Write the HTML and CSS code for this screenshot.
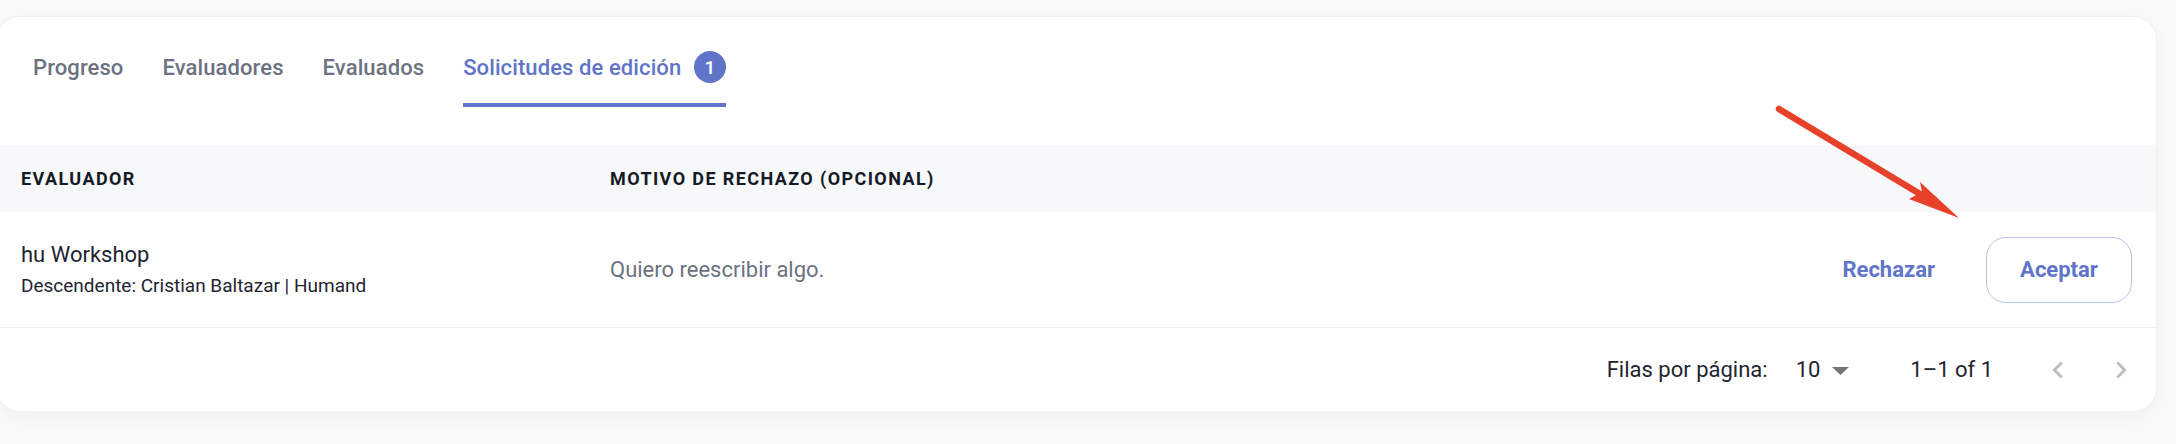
FILE: index.html
```html
<!DOCTYPE html>
<html lang="es">
<head>
<meta charset="utf-8">
<title>Solicitudes de edición</title>
<link rel="stylesheet" href="styles.css">
</head>
<body>
  <div class="card">
    <nav class="tabs">
      <div class="tab">Progreso</div>
      <div class="tab">Evaluadores</div>
      <div class="tab">Evaluados</div>
      <div class="tab active">Solicitudes de edición <span class="badge">1</span></div>
    </nav>
    <div class="table">
      <div class="thead">
        <div class="cell c1">EVALUADOR</div>
        <div class="cell c2">MOTIVO DE RECHAZO (OPCIONAL)</div>
        <div class="cell c3"></div>
      </div>
      <div class="trow">
        <div class="cell c1">
          <div class="name">hu Workshop</div>
          <div class="sub">Descendente: Cristian Baltazar | Humand</div>
        </div>
        <div class="cell c2 reason">Quiero reescribir algo.</div>
        <div class="cell c3 actions">
          <button class="btn-text">Rechazar</button>
          <button class="btn-outline">Aceptar</button>
        </div>
      </div>
    </div>
    <div class="pagination">
      <span class="pg-label">Filas por página:</span>
      <span class="pg-select">10
        <svg class="caret" width="17" height="8" viewBox="0 0 17 8"><path d="M0 0h17L8.5 8z" fill="#757575"/></svg>
      </span>
      <span class="pg-range">1–1 of 1</span>
      <span class="pg-btn">
        <svg width="34" height="34" viewBox="0 0 24 24"><path d="M15.41 7.41 14 6l-6 6 6 6 1.41-1.41L10.83 12z" fill="#bdbdbd"/></svg>
      </span>
      <span class="pg-btn">
        <svg width="34" height="34" viewBox="0 0 24 24"><path d="M10 6 8.59 7.41 13.17 12l-4.58 4.59L10 18l6-6z" fill="#bdbdbd"/></svg>
      </span>
    </div>
  </div>
  <svg class="annotation" width="2176" height="444" viewBox="0 0 2176 444">
    <line x1="1779" y1="109" x2="1925" y2="197" stroke="#e8412a" stroke-width="6.5" stroke-linecap="round"/>
    <path d="M1959 218 L1920 182 L1922 192 L1909 199 Z" fill="#e8412a"/>
  </svg>
</body>
</html>
```

FILE: styles.css
```css
* { box-sizing: border-box; }

html, body {
  margin: 0;
  padding: 0;
}

body {
  position: relative;
  width: 2176px;
  height: 444px;
  overflow: hidden;
  background: #fafafa;
  font-family: Roboto, "Liberation Sans", Arial, sans-serif;
  color: #1f2431;
}

.card {
  margin: 16px 19px 0 -4px;
  height: 396px;
  background: #ffffff;
  border: 1px solid #f0f1f3;
  border-radius: 24px;
  box-shadow: 0 6px 24px rgba(0, 0, 0, 0.045);
  display: flex;
  flex-direction: column;
}

/* Tabs */
.tabs {
  display: flex;
  gap: 39px;
  padding: 34px 0 0 36px;
}

.tab {
  display: flex;
  align-items: center;
  height: 56px;
  padding-bottom: 20px;
  border-bottom: 4px solid transparent;
  font-size: 22px;
  font-weight: 500;
  letter-spacing: 0.1px;
  color: #6b7280;
  white-space: pre;
}

.tab.active {
  color: #6075c9;
  border-bottom-color: #6075c9;
}

.badge {
  display: inline-flex;
  align-items: center;
  justify-content: center;
  width: 32px;
  height: 32px;
  margin-left: 7px;
  border-radius: 50%;
  background: #6075c9;
  color: #ffffff;
  font-size: 19px;
  font-weight: 500;
  letter-spacing: 0;
}

/* Table */
.table {
  margin-top: 38px;
}

.thead,
.trow {
  display: flex;
}

.thead {
  height: 67px;
  background: #f7f8fa;
  align-items: center;
}

.trow {
  height: 116px;
  align-items: center;
  border-bottom: 1px solid #eef0f3;
}

.cell.c1 {
  width: 592px;
  padding-left: 24px;
}

.cell.c2 {
  flex: 1;
  padding-left: 21px;
}

.cell.c3 {
  padding-right: 24px;
}

.thead .cell {
  font-size: 18px;
  font-weight: 700;
  letter-spacing: 1.4px;
  color: #141a26;
}

.name {
  font-size: 22px;
  color: #1f2431;
  line-height: 26px;
}

.sub {
  margin-top: 7px;
  font-size: 19px;
  color: #1f2431;
  line-height: 22px;
}

.reason {
  font-size: 22px;
  color: #6b7280;
}

.actions {
  display: flex;
  align-items: center;
}

.btn-text,
.btn-outline {
  font-family: inherit;
  font-size: 22px;
  font-weight: 700;
  color: #6075c9;
  background: transparent;
  cursor: pointer;
}

.btn-text {
  border: none;
  padding: 0;
  margin-right: 51px;
}

.btn-outline {
  width: 146px;
  height: 66px;
  border: 1.5px solid #b8c0ea;
  border-radius: 20px;
  padding: 0;
}

/* Pagination */
.pagination {
  flex: 1;
  display: flex;
  align-items: center;
  justify-content: flex-end;
  padding-right: 18px;
  font-size: 22px;
  color: #1f2431;
}

.pg-label {
  margin-right: 28px;
}

.pg-select {
  display: inline-flex;
  align-items: center;
  gap: 12px;
  margin-right: 61px;
}

.caret {
  margin-top: 2px;
}

.pg-range {
  margin-right: 48px;
}

.pg-btn {
  display: inline-flex;
  width: 34px;
  height: 34px;
}

.pg-btn + .pg-btn {
  margin-left: 29px;
}

.annotation {
  position: absolute;
  left: 0;
  top: 0;
  pointer-events: none;
}
```
